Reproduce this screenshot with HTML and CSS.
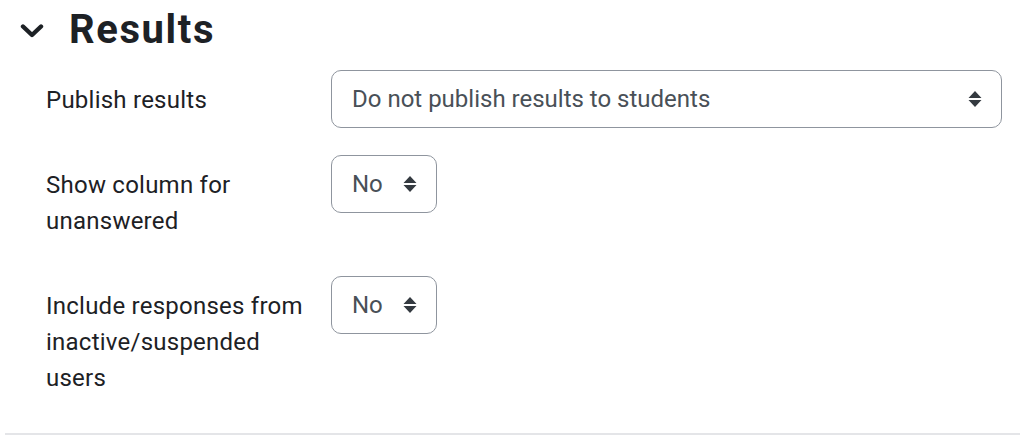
FILE: index.html
```html
<!DOCTYPE html>
<html>
<head>
  <title>Results settings</title>
  <link rel="stylesheet" href="styles.css">
</head>
<body>
  <fieldset class="section">
    <legend class="section-header">
      <svg class="collapse-icon" width="24" height="16" viewBox="0 0 24 16">
        <path d="M3 3.5 L12 12 L21 3.5" fill="none" stroke="#1d2125" stroke-width="4.4" stroke-linecap="round" stroke-linejoin="round"/>
      </svg>
      <h3>Results</h3>
    </legend>

    <div class="form-group">
      <label for="showresults">Publish results</label>
      <div class="select-wrap">
        <select id="showresults" class="custom-select wide">
          <option>Do not publish results to students</option>
        </select>
        <svg class="select-arrow" width="14" height="18" viewBox="0 0 14 18"><path d="M7 1 L13.5 8 H0.5 Z M0.5 10 H13.5 L7 17 Z" fill="#343a40"/></svg>
      </div>
    </div>

    <div class="form-group">
      <label for="showunanswered">Show column for unanswered</label>
      <div class="select-wrap">
        <select id="showunanswered" class="custom-select">
          <option>No</option>
        </select>
        <svg class="select-arrow" width="14" height="18" viewBox="0 0 14 18"><path d="M7 1 L13.5 8 H0.5 Z M0.5 10 H13.5 L7 17 Z" fill="#343a40"/></svg>
      </div>
    </div>

    <div class="form-group">
      <label for="includeinactive">Include responses from inactive/suspended users</label>
      <div class="select-wrap">
        <select id="includeinactive" class="custom-select">
          <option>No</option>
        </select>
        <svg class="select-arrow" width="14" height="18" viewBox="0 0 14 18"><path d="M7 1 L13.5 8 H0.5 Z M0.5 10 H13.5 L7 17 Z" fill="#343a40"/></svg>
      </div>
    </div>
  </fieldset>
</body>
</html>
```

FILE: styles.css
```css
body {
  margin: 0;
  font-family: Roboto, "Liberation Sans", sans-serif;
  font-size: 24px;
  line-height: 36px;
  color: #1d2125;
  background-color: #fff;
}

.section {
  margin: 0 0 0 5px;
  padding: 0 18px 0 41px;
  border: none;
  border-bottom: 2px solid #e4e5e8;
}

.section-header {
  display: flex;
  align-items: center;
  padding: 0;
  margin-left: -26px;
  height: 60px;
  margin-bottom: 10px;
}

.collapse-icon {
  margin-right: 25px;
  margin-top: 2px;
}

.section-header h3 {
  margin: 0;
  font-size: 40px;
  font-weight: 700;
  line-height: 46px;
  letter-spacing: 0.04em;
}

.form-group {
  display: grid;
  grid-template-columns: 260px 1fr;
  column-gap: 25px;
  align-items: start;
  margin-bottom: 25px;
}

.form-group label {
  padding: 12px 0;
  letter-spacing: 0.01em;
}

.select-wrap {
  position: relative;
  display: inline-block;
  justify-self: start;
}

.select-wrap:has(.wide) {
  justify-self: stretch;
}

.custom-select {
  appearance: none;
  -webkit-appearance: none;
  display: block;
  height: 58px;
  padding: 0 53px 0 20px;
  font-family: inherit;
  font-size: 24px;
  color: #495057;
  background-color: #fff;
  border: 1px solid #8f959e;
  border-radius: 10px;
}

.custom-select.wide {
  width: 100%;
}

.select-arrow {
  position: absolute;
  right: 20px;
  top: 20px;
  pointer-events: none;
}
```
